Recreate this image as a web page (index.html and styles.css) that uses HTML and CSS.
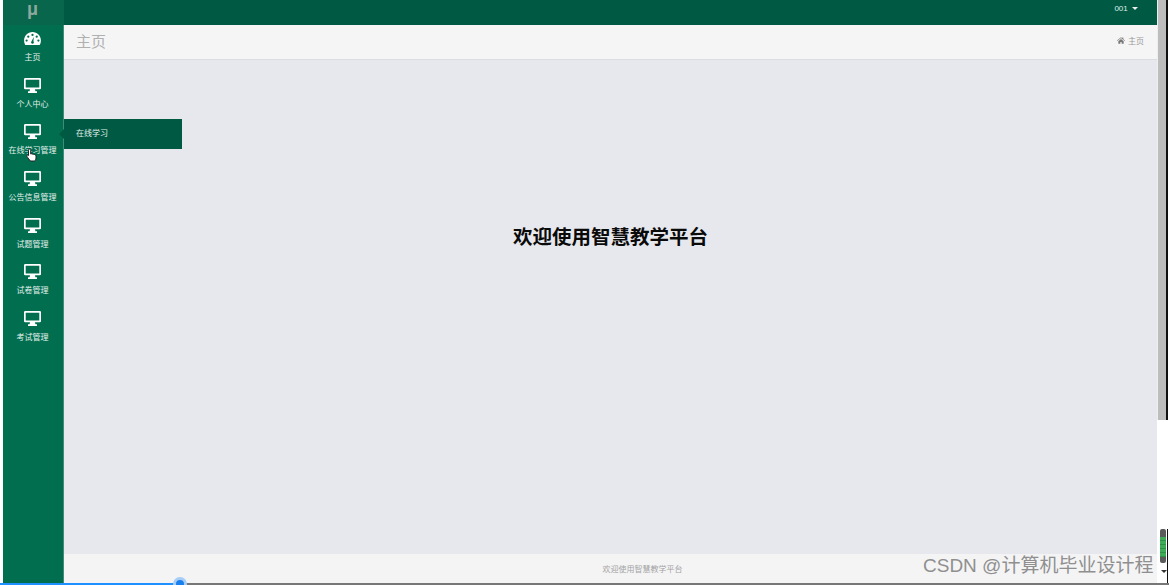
FILE: index.html
```html
<!DOCTYPE html>
<html lang="zh-CN">
<head>
  <meta charset="UTF-8">
  <title>智慧教学平台</title>
  <link rel="stylesheet" href="styles.css">
</head>
<body>

<svg class="defs" width="0" height="0">
  <symbol id="monitor" viewBox="0 0 17 15">
    <path fill="#fff" fill-rule="evenodd" d="M1.200 0h14.600A1.200 1.200 0 0 1 17 1.200v8.800a1.200 1.200 0 0 1-1.200 1.200h-4.800l.4 2h1.600V15H4v-1.800h1.600l.4-2H1.200A1.200 1.200 0 0 1 0 10V1.200A1.200 1.200 0 0 1 1.200 0zM1.700 1.700v7.800h13.600V1.700z"/>
  </symbol>
</svg>

<div class="screen">
  <div class="app">
    <header class="topbar">
      <div class="logo">μ</div>
      <div class="user">001 <span class="caret"></span></div>
    </header>

    <div class="body-row">
      <!-- sidebar -->
      <nav class="sidebar">
        <a class="nav-item">
          <svg class="nav-icon" viewBox="0 0 18 16">
            <path fill="#fff" fill-rule="evenodd" d="M9 1C4 1 0 5 0 10c0 1.800.5 3.400 1.300 4.800h15.400C17.500 13.400 18 11.800 18 10c0-5-4-9-9-9zM9 3a1.200 1.200 0 1 1 0 2.400A1.200 1.200 0 0 1 9 3zM4.500 4.800a1.200 1.200 0 1 1 0 2.400 1.200 1.200 0 0 1 0-2.400zM13.500 4.800a1.200 1.200 0 1 1 0 2.400 1.200 1.200 0 0 1 0-2.400zM2.700 9a1.200 1.200 0 1 1 0 2.400A1.200 1.200 0 0 1 2.700 9zM15.300 9a1.200 1.200 0 1 1 0 2.400 1.200 1.200 0 0 1 0-2.400zM10.300 6.500L10 11a1.500 1.500 0 1 1-2 0z"/>
          </svg>
          <span>主页</span>
        </a>
        <a class="nav-item"><svg class="nav-icon"><use href="#monitor"/></svg><span>个人中心</span></a>
        <a class="nav-item"><svg class="nav-icon"><use href="#monitor"/></svg><span>在线学习管理</span></a>
        <a class="nav-item"><svg class="nav-icon"><use href="#monitor"/></svg><span>公告信息管理</span></a>
        <a class="nav-item"><svg class="nav-icon"><use href="#monitor"/></svg><span>试题管理</span></a>
        <a class="nav-item"><svg class="nav-icon"><use href="#monitor"/></svg><span>试卷管理</span></a>
        <a class="nav-item"><svg class="nav-icon"><use href="#monitor"/></svg><span>考试管理</span></a>
      </nav>

      <main class="main">
        <div class="page-head">
          <h2>主页</h2>
          <div class="crumb">
            <svg class="home" viewBox="0 0 12 10"><path fill="#777" d="M6 0l2 1.700V.6h1.500v2.400L12 5l-.6.700L6 1.300.6 5.700 0 5zM2 6l4-3.300L10 6v4H7V7.300H5V10H2z"/></svg>
            主页
          </div>
        </div>
        <div class="content">
          <h1>欢迎使用智慧教学平台</h1>
        </div>
        <footer class="foot">欢迎使用智慧教学平台</footer>
      </main>
    </div>
  </div>

  <div class="scrollbar">
    <div class="track"></div>
    <div class="scroll-low">
      <div class="thumb"><div class="thumb-lit"></div></div>
      <div class="scroll-down"></div>
    </div>
  </div>
</div>

<div class="progress"><div class="played"></div><div class="knob"></div></div>

<!-- flyout for hovered item -->
<div class="flyout">在线学习</div>

<svg class="cursor" viewBox="0 0 12 14">
  <path fill="#fff" stroke="#222" stroke-width="1" d="M3.500 1c.8 0 1.200.5 1.200 1.200V6l.6-.2c.6-.2 1 .1 1.200.4.500-.2 1-.1 1.200.3.500-.2 1.100 0 1.300.5.500-.1 1 .2 1 .8V10c0 1.500-.9 3-1.500 3H4.500C3.500 12 2 10 1 8.500c-.4-.6-.2-1.200.3-1.400.5-.2 1 .1 1.200.5V2.200C2.500 1.500 2.900 1 3.500 1z"/>
</svg>

<div class="watermark">CSDN @计算机毕业设计程</div>

</body>
</html>
```

FILE: styles.css
```css
* {
  margin: 0;
  padding: 0;
  box-sizing: border-box;
}

html, body {
  height: 100%;
  overflow: hidden;
}

body {
  font-family: "Liberation Sans", "Noto Sans CJK SC", sans-serif;
  background: #fff;
  position: relative;
  display: flex;
  flex-direction: column;
}

.defs {
  position: absolute;
}

.screen {
  flex: 1;
  min-height: 0;
  display: flex;
  padding-left: 3px;
}

.app {
  flex: 1;
  min-width: 0;
  display: flex;
  flex-direction: column;
}

.topbar {
  height: 25px;
  background: #005a43;
  display: flex;
  justify-content: space-between;
  color: #fff;
}

.logo {
  width: 61px;
  padding-right: 2px;
  background: #07664c;
  color: #8fa89f;
  font-size: 18px;
  font-weight: bold;
  text-align: center;
  line-height: 19px;
}

.user {
  font-size: 8px;
  line-height: 17px;
  padding-right: 19px;
  color: #dfeee9;
}

.caret {
  display: inline-block;
  margin-left: 2px;
  vertical-align: middle;
  border-top: 3px solid #eee;
  border-left: 3px solid transparent;
  border-right: 3px solid transparent;
}

.body-row {
  flex: 1;
  min-height: 0;
  display: flex;
}

.sidebar {
  width: 61px;
  background: #006e4f;
  border-right: 1px solid #3f8d76;
  padding-right: 1px;
  flex-shrink: 0;
}

.nav-item {
  height: 46.7px;
  display: flex;
  flex-direction: column;
  align-items: center;
  padding-top: 6px;
  color: #e4f1ed;
  font-size: 8px;
  white-space: nowrap;
}

.nav-icon {
  width: 17px;
  height: 15px;
  margin-bottom: 5px;
}

.main {
  flex: 1;
  min-width: 0;
  display: flex;
  flex-direction: column;
  background: #e7e8ed;
}

.page-head {
  height: 35px;
  background: #f5f5f6;
  border-bottom: 1px solid #dcdde0;
  display: flex;
  justify-content: space-between;
  align-items: center;
  padding: 0 13px 3px 12px;
}

.page-head h2 {
  font-size: 15px;
  font-weight: normal;
  color: #b0b0b0;
}

.crumb {
  font-size: 8px;
  color: #999;
  display: flex;
  align-items: center;
  gap: 3px;
}

.home {
  width: 8px;
  height: 7px;
}

.content {
  flex: 1;
  display: flex;
  justify-content: center;
  padding-top: 164px;
}

.content h1 {
  font-size: 19.500px;
  line-height: 26px;
  font-weight: bold;
  color: #0a0a0a;
}

.foot {
  height: 29px;
  padding-left: 64px;
  background: #f4f4f5;
  color: #a3a3a3;
  font-size: 8px;
  line-height: 31px;
  text-align: center;
}

.scrollbar {
  width: 12px;
  display: flex;
  flex-direction: column;
}

.track {
  width: 11px;
  height: 420px;
  margin-bottom: 109px;
  background: #bdbdbd;
  border-left: 1px solid #eee;
  border-right: 2px solid #111;
}

.scroll-low {
  flex: 1;
  width: 11px;
  border-right: 1px solid #111;
}

.thumb {
  width: 6px;
  height: 34px;
  margin-left: 3px;
  padding-top: 8px;
  border-radius: 2px;
  background: #5a5a5a;
}

.thumb-lit {
  height: 20px;
  background: repeating-linear-gradient(#3dab57 0 3px, #2f8f47 3px 4px);
}

.scroll-down {
  width: 0;
  margin: 7px 0 0 4px;
  border-top: 3px solid #333;
  border-left: 3px solid transparent;
  border-right: 3px solid transparent;
}

.progress {
  height: 2px;
  background: #777;
  position: relative;
}

.played {
  width: 180px;
  height: 2px;
  background: #1e90ff;
}

.knob {
  position: absolute;
  left: 173px;
  top: -6px;
  width: 14px;
  height: 14px;
  border-radius: 50%;
  background: #1a7fee;
  border: 3px solid #a6cdf5;
}

.flyout {
  position: absolute;
  left: 64px;
  top: 119px;
  width: 118px;
  height: 30px;
  background: #005a43;
  color: #e4f1ed;
  font-size: 8px;
  line-height: 29px;
  padding-left: 12px;
}

.flyout::before {
  content: "";
  position: absolute;
  left: -5px;
  top: 10px;
  border-top: 5px solid transparent;
  border-bottom: 5px solid transparent;
  border-right: 5px solid #005a43;
}

.cursor {
  position: absolute;
  left: 26px;
  top: 148px;
  width: 12px;
  height: 14px;
}

.watermark {
  position: absolute;
  left: 923px;
  top: 555px;
  font-size: 19px;
  line-height: 22px;
  color: #8f8f8f;
  white-space: nowrap;
}
```
